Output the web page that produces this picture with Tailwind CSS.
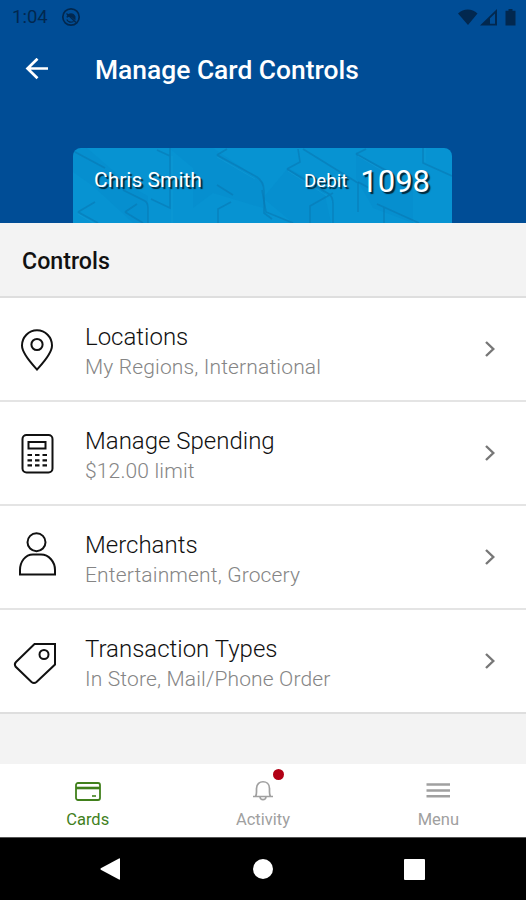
<!doctype html>
<html lang="en">
  <head>
    <meta charset="UTF-8" />
    <meta name="viewport" content="width=device-width, initial-scale=1.0" />
    <title>Manage Card Controls</title>
    <script src="https://cdn.jsdelivr.net/npm/@tailwindcss/browser@4"></script>
  </head>
  <body class="flex h-[900px] w-[526px] flex-col overflow-hidden bg-[#f3f3f3] font-[Roboto,sans-serif] text-[#111]">
    <header class="flex h-[223px] shrink-0 flex-col bg-[#004d96]">
      <!-- Status bar -->
      <div class="flex h-[34px] items-center pr-[9px] pl-[12px] text-[#02284f]">
        <span class="text-[18.5px] leading-none">1:04</span>
        <svg class="ml-[13px] h-5 w-5" viewBox="0 0 20 20" fill="none" stroke="currentColor" aria-hidden="true">
          <circle cx="10" cy="10" r="8.2" stroke-width="1.7" />
          <path d="M5.5 9.5C7 5 13 5 14.5 9.5V13.5L11 10.5C9 9.5 7.5 9.5 6 11Z" fill="currentColor" stroke="none" />
          <path d="M5.8 12.5C7 15.2 10 15.8 12.5 14.5M5.5 6.5L15 15.5" stroke-width="1.3" />
        </svg>
        <svg class="ml-auto h-[17px] w-[58px] overflow-visible" viewBox="0 0 58 17" fill="currentColor" aria-hidden="true">
          <path d="M-1 4.5C4.5-1 13-1 18.5 4.5L9 16Z" />
          <path d="M21 16.5L38 0V16.5ZM31 14.7H36V4.5L31 9.2Z" fill-rule="evenodd" />
          <path d="M49.5 0H53.5V1.8H56.5V16.5H46.5V1.8H49.5Z" />
        </svg>
      </div>

      <nav class="flex h-[70px] items-center pl-[25px]" aria-label="Main navigation">
        <svg class="h-[22px] w-[23px]" viewBox="0 0 23 22" fill="none" stroke="#fff" stroke-width="2.7" aria-label="Back">
          <path d="M23 10.5H2.5M12.5 0.7L2.5 10.5L12.5 20.3" />
        </svg>
        <h1 class="ml-[47px] pt-[3px] text-[26.4px] leading-none font-medium text-white">Manage Card Controls</h1>
      </nav>

      <!-- Card preview -->
      <div class="relative mr-[74px] ml-[73px] mt-auto h-[75px] overflow-hidden rounded-t-[8px] bg-[#0793d2]">
        <svg class="absolute inset-0 h-full w-full" viewBox="0 0 379 75" fill="none" aria-hidden="true">
          <g fill="#0880c0" fill-opacity=".18">
            <path d="M0 2L14 0L60 40L75 48V75H60L20 38L0 24Z" />
            <path d="M96 0H140L190 34V60L140 45L120 60V20Z" />
            <path d="M215 20L250 38L258 75H220L190 50Z" />
            <path d="M283 4L340 40V75L300 60L283 30Z" />
          </g>
          <g stroke="#0873ad" stroke-opacity=".5" stroke-width="1.6">
            <path d="M2 4L32 20M50 42L72 53Q75 55 75 60V75M5 64L22 54M5 64L25 75M52 64L64 56M52 64L70 75" />
            <path d="M97 0V60L78 51M84 2L97 8M144 7L184 29Q191 34 191 43V65L199 71M144 7L154 1M145 75V61L158 54M144 37L160 47" />
            <path d="M214 21L227 14L225 1M214 21L256 46Q260 49 260 56V75M189 42L193 64L220 75M237 75V58L260 45M230 1L285 35V64" />
            <path d="M283 6L293 1M283 6L318 25M285 34L300 42M304 56L346 75M311 59V75M350 0V15L379 28" />
          </g>
          <g stroke="#21a5dc" stroke-opacity=".3">
            <path d="M5 66L24 77M99 8V75M144 9L182 31M285 8L317 27M215 23L254 48M352 0V14" />
          </g>
        </svg>
        <div class="relative flex items-center pr-[22px] pl-[21px] pt-[16px] leading-[34px] text-white [text-shadow:2px_2px_1px_#000b]">
          <span class="-mt-[4px] text-[21px]">Chris Smith</span>
          <span class="-mt-[2px] ml-auto text-[18.7px]">Debit</span>
          <span class="ml-[13px] pt-px text-[31px]">1098</span>
        </div>
      </div>
    </header>

    <main class="flex-1">
      <h2 class="flex h-[75px] items-center border-b-2 border-[#dedede] pt-[4px] pl-[22px] text-[23.2px] font-medium">Controls</h2>
      <ul>
        <li class="flex h-[104px] items-center border-b-2 border-[#e4e4e4] bg-white pr-[31px] pl-[13px]">
          <svg class="h-[44px] w-[44px] overflow-visible text-[#111]" viewBox="0 0 44 44" fill="none" stroke="currentColor" stroke-width="2" aria-hidden="true">
            <path d="M24 42.5C20 38 9 27 9 18.5A15 15.3 0 0 1 39 18.5C39 27 28 38 24 42.5Z" />
            <circle cx="24" cy="17.5" r="5.6" />
          </svg>
          <div class="ml-[28px] pt-[5px]">
            <h3 class="text-[24px] leading-[30px] font-light">Locations</h3>
            <p class="text-[21px] leading-[30px] font-light tracking-[0.15px] text-[#858585]">My Regions, International</p>
          </div>
          <svg class="ml-auto h-[16px] w-[10px]" viewBox="0 0 10 16" fill="none" stroke="#777" stroke-width="2.4" aria-hidden="true">
            <path d="M1 1L8.3 8L1 15" />
          </svg>
        </li>
        <li class="flex h-[104px] items-center border-b-2 border-[#e4e4e4] bg-white pr-[31px] pl-[13px]">
          <svg class="h-[44px] w-[44px] overflow-visible text-[#111]" viewBox="0 0 44 44" fill="none" stroke="currentColor" stroke-width="2" aria-hidden="true">
            <rect x="9.5" y="4" width="30" height="37.5" rx="4" />
            <rect x="15.5" y="11" width="17" height="6.5" />
            <path d="M14.5 24H34M14.5 29.3H34M14.5 34.3H34" stroke-dasharray="4.5 3" stroke-width="2.2" />
          </svg>
          <div class="ml-[28px] pt-[5px]">
            <h3 class="text-[24px] leading-[30px] font-light">Manage Spending</h3>
            <p class="text-[21px] leading-[30px] font-light tracking-[0.15px] text-[#858585]">$12.00 limit</p>
          </div>
          <svg class="ml-auto h-[16px] w-[10px]" viewBox="0 0 10 16" fill="none" stroke="#777" stroke-width="2.4" aria-hidden="true">
            <path d="M1 1L8.3 8L1 15" />
          </svg>
        </li>
        <li class="flex h-[104px] items-center border-b-2 border-[#e4e4e4] bg-white pr-[31px] pl-[13px]">
          <svg class="h-[44px] w-[44px] overflow-visible text-[#111]" viewBox="0 0 44 44" fill="none" stroke="currentColor" stroke-width="2" aria-hidden="true">
            <circle cx="23.5" cy="7.2" r="9" />
            <path d="M7 39.5V35C7 27 12 19.5 20 19.5H28C36 19.5 42 27 42 35V39.5Z" />
          </svg>
          <div class="ml-[28px] pt-[5px]">
            <h3 class="text-[24px] leading-[30px] font-light">Merchants</h3>
            <p class="text-[21px] leading-[30px] font-light tracking-[0.15px] text-[#858585]">Entertainment, Grocery</p>
          </div>
          <svg class="ml-auto h-[16px] w-[10px]" viewBox="0 0 10 16" fill="none" stroke="#777" stroke-width="2.4" aria-hidden="true">
            <path d="M1 1L8.3 8L1 15" />
          </svg>
        </li>
        <li class="flex h-[104px] items-center border-b-2 border-[#dedede] bg-white pr-[31px] pl-[13px]">
          <svg class="h-[44px] w-[44px] overflow-visible text-[#111]" viewBox="0 0 44 44" fill="none" stroke="currentColor" stroke-width="2" aria-hidden="true">
            <path d="M21.5 5H42V25.5L23.5 43Q21 45 18.5 43L2.5 27.5Q1 25 3 23Z" />
            <circle cx="31" cy="15.5" r="4.5" />
          </svg>
          <div class="ml-[28px] pt-[5px]">
            <h3 class="text-[24px] leading-[30px] font-light">Transaction Types</h3>
            <p class="text-[21px] leading-[30px] font-light tracking-[0.15px] text-[#858585]">In Store, Mail/Phone Order</p>
          </div>
          <svg class="ml-auto h-[16px] w-[10px]" viewBox="0 0 10 16" fill="none" stroke="#777" stroke-width="2.4" aria-hidden="true">
            <path d="M1 1L8.3 8L1 15" />
          </svg>
        </li>
      </ul>
    </main>

    <!-- Tab bar -->
    <footer class="shrink-0">
      <div class="grid h-[74px] grid-cols-3 border-b border-[#555] bg-white text-[16.5px] leading-[20px] text-[#a0a0a0]">
        <div class="flex flex-col items-center pt-[15px] text-[#41801c]">
          <svg class="h-[24px] w-[26px]" viewBox="0 0 26 24" fill="none" stroke="currentColor" aria-hidden="true">
            <rect x="1" y="4" width="24" height="17" rx="2" stroke-width="1.8" />
            <path d="M1 9H25" stroke-width="2.6" />
            <path d="M17 17H21" stroke-width="1.6" />
          </svg>
          <span class="mt-[7px]">Cards</span>
        </div>
        <div class="flex flex-col items-center pt-[15px]">
          <div class="relative">
            <svg class="h-[24px] w-[20px]" viewBox="0 0 20 24" fill="none" stroke="currentColor" stroke-width="1.7" aria-hidden="true">
              <path d="M0 17.5H20M2.5 17.5Q3.5 16 3.5 13V9.5C3.5 0.5 16.5 0.5 16.5 9.5V13Q16.5 16 17.5 17.5M7 18C7.5 21.5 12.5 21.5 13 18" />
            </svg>
            <span class="absolute -top-[10px] left-[20px] h-[11px] w-[11px] rounded-full bg-[#b20015]"></span>
          </div>
          <span class="mt-[7px]">Activity</span>
        </div>
        <div class="flex flex-col items-center pt-[15px]">
          <svg class="h-[24px] w-[24px]" viewBox="0 0 24 24" fill="none" stroke="currentColor" stroke-width="2.4" aria-hidden="true">
            <path d="M0.5 5.5H24M0.5 11.5H24M0.5 17.2H24" />
          </svg>
          <span class="mt-[7px]">Menu</span>
        </div>
      </div>
      <!-- System buttons -->
      <div class="flex h-[62px] items-center justify-between bg-black pr-[101px] pl-[100px] text-white">
        <svg class="h-[22px] w-[20px]" viewBox="0 0 20 22" fill="currentColor" aria-hidden="true">
          <path d="M19 0.5Q20 0 20 1V21Q20 22 19 21.5L0.8 11.8Q0 11 0.8 10.2Z" />
        </svg>
        <span class="ml-[2px] h-5 w-5 rounded-full bg-white"></span>
        <span class="h-[21px] w-[21px] rounded-[1px] bg-white"></span>
      </div>
    </footer>
  </body>
</html>
